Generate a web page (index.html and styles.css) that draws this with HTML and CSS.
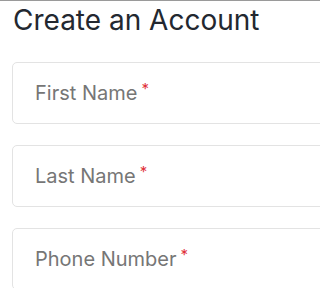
FILE: index.html
```html
<!DOCTYPE html>
<html>
<head>
<meta charset="utf-8">
<link rel="stylesheet" href="styles.css">
</head>
<body>
<div class="page">
  <h1 class="title">Create an Account</h1>
  <div class="fields">
    <div class="field"><span class="label">First Name</span><span class="req">*</span></div>
    <div class="field"><span class="label">Last Name</span><span class="req">*</span></div>
    <div class="field"><span class="label">Phone Number</span><span class="req">*</span></div>
  </div>
</div>
</body>
</html>
```
FILE: styles.css
```css
html, body {
  margin: 0;
  padding: 0;
  background: #ffffff;
  overflow: hidden;
}
.page {
  height: 288px;
  overflow: hidden;
  border-top: 1px solid #9a9a9a;
  box-sizing: border-box;
  padding-left: 12px;
  font-family: "Inter", sans-serif;
}
.title {
  margin: 0;
  font-family: "Inter", sans-serif;
  font-weight: 400;
  font-size: 28px;
  line-height: 38px;
  color: #232830;
  padding-left: 1px;
  white-space: nowrap;
}
.fields {
  margin-top: 23px;
  display: flex;
  flex-direction: column;
  gap: 21px;
  width: 400px;
}
.field {
  height: 62px;
  box-sizing: border-box;
  border: 1px solid #e3e3e3;
  border-radius: 5px;
  display: flex;
  align-items: center;
  padding-left: 22px;
}
.label {
  font-size: 20px;
  color: #767676;
}
.req {
  color: #e0323b;
  font-size: 15px;
  margin-left: 4px;
  position: relative;
  top: -5px;
}
```
